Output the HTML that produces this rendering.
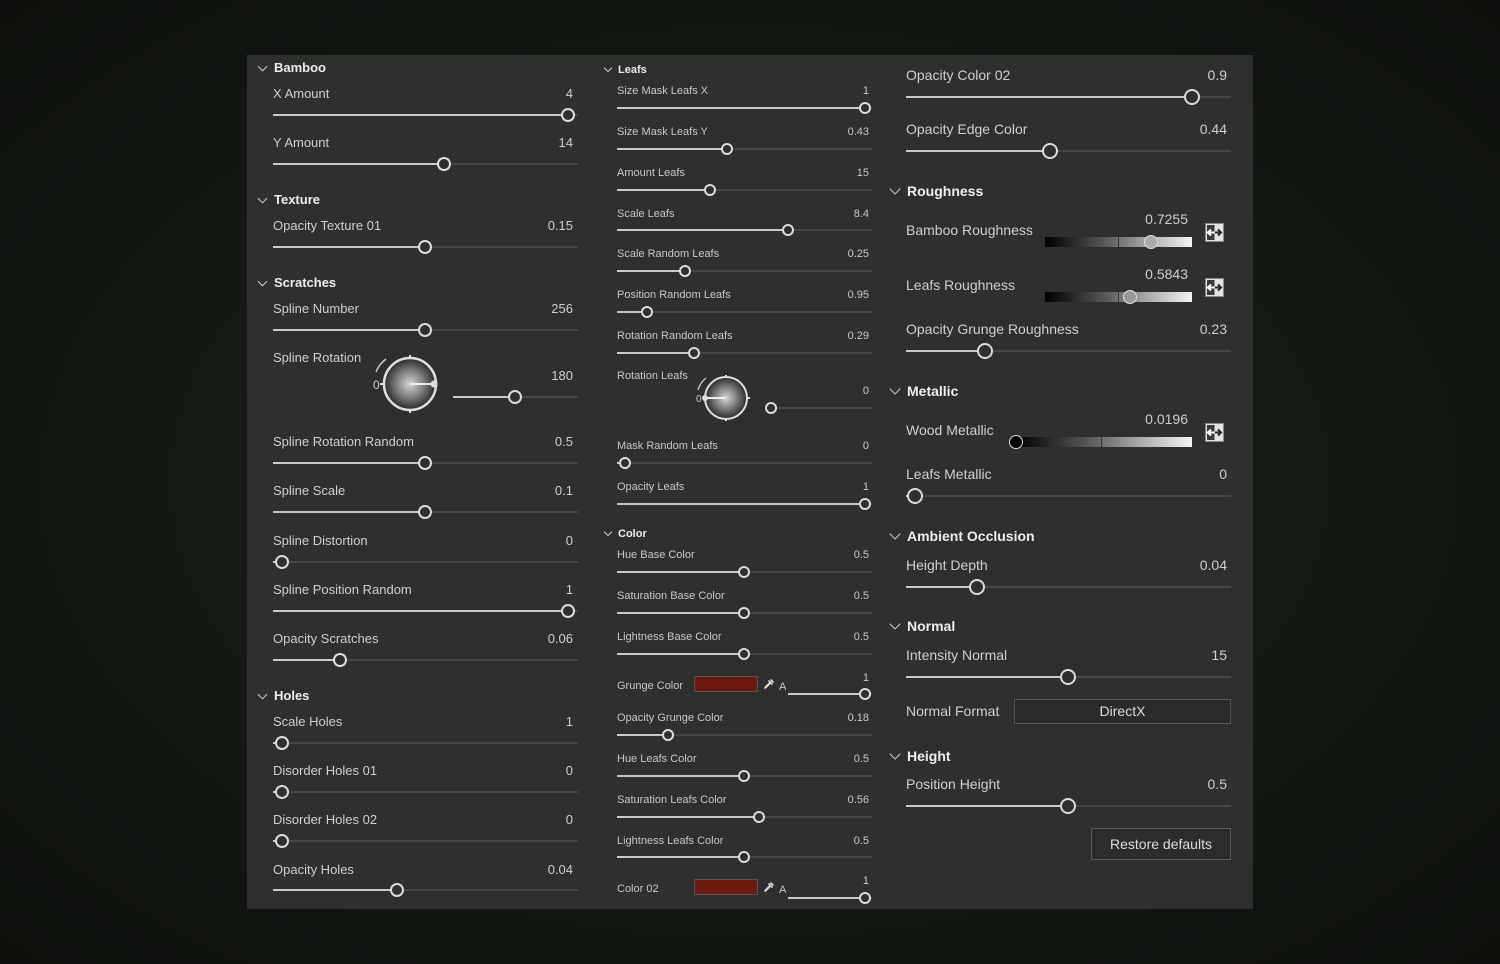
<!DOCTYPE html>
<html><head><meta charset="utf-8">
<style>
html,body{margin:0;padding:0}
body{width:1500px;height:964px;position:relative;overflow:hidden;background:radial-gradient(ellipse at 50% 50%,#1c221b 0%,#121611 70%,#0d100c 100%);font-family:"Liberation Sans",sans-serif;color:#d2d2d2}
#p{position:absolute;left:247px;top:55px;width:1006px;height:854px;background:#2f2f2f}
.L,.V,.H,.M,.MV,.R,.RV,.RH{position:absolute;white-space:nowrap}
.L{font-size:13px;line-height:16px;color:#cfcfcf}
.V{font-size:13px;line-height:16px;width:100px;text-align:right;color:#cfcfcf}
.H{font-size:13px;font-weight:bold;line-height:16px;color:#eee}
.M{font-size:11px;line-height:14px;color:#c8c8c8}
.MV{font-size:11px;line-height:14px;width:80px;text-align:right;color:#c8c8c8}
.R{font-size:14px;line-height:18px;color:#cfcfcf}
.RV{font-size:14px;line-height:18px;width:100px;text-align:right;color:#cfcfcf}
.RH{font-size:14px;font-weight:bold;line-height:18px;color:#eee}
.ch{position:absolute;width:6px;height:6px;border-right:1.5px solid #ccc;border-bottom:1.5px solid #ccc;transform:rotate(45deg)}
.s{position:absolute;height:2px;background:#464646}
.f{position:absolute;left:0;top:0;height:2px;background:#c9c9c9}
.k{position:absolute;border-radius:50%;border:2px solid #dcdcdc;background:#2f2f2f;box-sizing:border-box}
.k1{width:14px;height:14px;top:-6px;margin-left:-7px}
.k2{width:12px;height:12px;top:-5px;margin-left:-6px}
.k3{width:16px;height:16px;top:-7px;margin-left:-8px}
.gb{position:absolute;width:147px;height:10px;background:linear-gradient(90deg,#000 0%,#555 40%,#aaa 70%,#f4f4f4 100%)}
.gb i{position:absolute;left:73px;top:0;width:1px;height:10px;background:#333}
.ic{position:absolute;width:19px;height:19px}
.sw{position:absolute;width:64px;height:16px;background:#6d1b10;border:1px solid #555;box-sizing:border-box}
</style></head><body>
<div id="p"></div>

<!-- LEFT COLUMN -->
<div class="ch" style="left:259px;top:63px"></div><div class="H" style="left:274px;top:60px">Bamboo</div>
<div class="L" style="left:273px;top:86px">X Amount</div><div class="V" style="left:473px;top:86px">4</div>
<div class="s" style="left:273px;top:114px;width:305px"><div class="f" style="width:295px"></div><div class="k k1" style="left:295px"></div></div>
<div class="L" style="left:273px;top:135px">Y Amount</div><div class="V" style="left:473px;top:135px">14</div>
<div class="s" style="left:273px;top:163px;width:305px"><div class="f" style="width:171px"></div><div class="k k1" style="left:171px"></div></div>

<div class="ch" style="left:259px;top:195px"></div><div class="H" style="left:274px;top:192px">Texture</div>
<div class="L" style="left:273px;top:218px">Opacity Texture 01</div><div class="V" style="left:473px;top:218px">0.15</div>
<div class="s" style="left:273px;top:246px;width:305px"><div class="f" style="width:152px"></div><div class="k k1" style="left:152px"></div></div>

<div class="ch" style="left:259px;top:278px"></div><div class="H" style="left:274px;top:275px">Scratches</div>
<div class="L" style="left:273px;top:301px">Spline Number</div><div class="V" style="left:473px;top:301px">256</div>
<div class="s" style="left:273px;top:329px;width:305px"><div class="f" style="width:152px"></div><div class="k k1" style="left:152px"></div></div>
<div class="L" style="left:273px;top:350px">Spline Rotation</div><div class="V" style="left:473px;top:368px">180</div>
<svg style="position:absolute;left:370px;top:350px" width="80" height="70" viewBox="0 0 80 70">
<defs><radialGradient id="g1" cx="50%" cy="50%" r="50%"><stop offset="0" stop-color="#d8d8d8"/><stop offset="1" stop-color="#2a2a2a"/></radialGradient></defs>
<path d="M6 22 A30 30 0 0 1 16 9" stroke="#ccc" stroke-width="1.5" fill="none"/>
<circle cx="40" cy="34" r="26" fill="url(#g1)" stroke="#e0e0e0" stroke-width="2.5"/>
<line x1="40" y1="5" x2="40" y2="9" stroke="#ddd" stroke-width="2"/><line x1="40" y1="59" x2="40" y2="63" stroke="#ddd" stroke-width="2"/><line x1="10" y1="34" x2="14" y2="34" stroke="#ddd" stroke-width="2"/>
<line x1="40" y1="34" x2="64" y2="34" stroke="#eee" stroke-width="2"/><circle cx="64" cy="34" r="3.5" fill="#ddd"/>
<text x="3" y="39" font-size="12" fill="#ccc" font-family="Liberation Sans">0</text></svg>
<div class="s" style="left:453px;top:396px;width:125px"><div class="f" style="width:62px"></div><div class="k k1" style="left:62px"></div></div>
<div class="L" style="left:273px;top:434px">Spline Rotation Random</div><div class="V" style="left:473px;top:434px">0.5</div>
<div class="s" style="left:273px;top:462px;width:305px"><div class="f" style="width:152px"></div><div class="k k1" style="left:152px"></div></div>
<div class="L" style="left:273px;top:483px">Spline Scale</div><div class="V" style="left:473px;top:483px">0.1</div>
<div class="s" style="left:273px;top:511px;width:305px"><div class="f" style="width:152px"></div><div class="k k1" style="left:152px"></div></div>
<div class="L" style="left:273px;top:533px">Spline Distortion</div><div class="V" style="left:473px;top:533px">0</div>
<div class="s" style="left:273px;top:561px;width:305px"><div class="f" style="width:9px"></div><div class="k k1" style="left:9px"></div></div>
<div class="L" style="left:273px;top:582px">Spline Position Random</div><div class="V" style="left:473px;top:582px">1</div>
<div class="s" style="left:273px;top:610px;width:305px"><div class="f" style="width:295px"></div><div class="k k1" style="left:295px"></div></div>
<div class="L" style="left:273px;top:631px">Opacity Scratches</div><div class="V" style="left:473px;top:631px">0.06</div>
<div class="s" style="left:273px;top:659px;width:305px"><div class="f" style="width:67px"></div><div class="k k1" style="left:67px"></div></div>

<div class="ch" style="left:259px;top:691px"></div><div class="H" style="left:274px;top:688px">Holes</div>
<div class="L" style="left:273px;top:714px">Scale Holes</div><div class="V" style="left:473px;top:714px">1</div>
<div class="s" style="left:273px;top:742px;width:305px"><div class="f" style="width:9px"></div><div class="k k1" style="left:9px"></div></div>
<div class="L" style="left:273px;top:763px">Disorder Holes 01</div><div class="V" style="left:473px;top:763px">0</div>
<div class="s" style="left:273px;top:791px;width:305px"><div class="f" style="width:9px"></div><div class="k k1" style="left:9px"></div></div>
<div class="L" style="left:273px;top:812px">Disorder Holes 02</div><div class="V" style="left:473px;top:812px">0</div>
<div class="s" style="left:273px;top:840px;width:305px"><div class="f" style="width:9px"></div><div class="k k1" style="left:9px"></div></div>
<div class="L" style="left:273px;top:862px">Opacity Holes</div><div class="V" style="left:473px;top:862px">0.04</div>
<div class="s" style="left:273px;top:889px;width:305px"><div class="f" style="width:124px"></div><div class="k k1" style="left:124px"></div></div>

<!-- MIDDLE COLUMN -->
<div class="ch" style="left:605px;top:65px;width:5px;height:5px"></div><div class="M" style="left:618px;top:63px;font-weight:bold;color:#eee">Leafs</div>
<div class="M" style="left:617px;top:84px">Size Mask Leafs X</div><div class="MV" style="left:789px;top:84px">1</div>
<div class="s" style="left:617px;top:107px;width:255px"><div class="f" style="width:248px"></div><div class="k k2" style="left:248px"></div></div>
<div class="M" style="left:617px;top:125px">Size Mask Leafs Y</div><div class="MV" style="left:789px;top:125px">0.43</div>
<div class="s" style="left:617px;top:148px;width:255px"><div class="f" style="width:110px"></div><div class="k k2" style="left:110px"></div></div>
<div class="M" style="left:617px;top:166px">Amount Leafs</div><div class="MV" style="left:789px;top:166px">15</div>
<div class="s" style="left:617px;top:189px;width:255px"><div class="f" style="width:93px"></div><div class="k k2" style="left:93px"></div></div>
<div class="M" style="left:617px;top:207px">Scale Leafs</div><div class="MV" style="left:789px;top:207px">8.4</div>
<div class="s" style="left:617px;top:229px;width:255px"><div class="f" style="width:171px"></div><div class="k k2" style="left:171px"></div></div>
<div class="M" style="left:617px;top:247px">Scale Random Leafs</div><div class="MV" style="left:789px;top:247px">0.25</div>
<div class="s" style="left:617px;top:270px;width:255px"><div class="f" style="width:68px"></div><div class="k k2" style="left:68px"></div></div>
<div class="M" style="left:617px;top:288px">Position Random Leafs</div><div class="MV" style="left:789px;top:288px">0.95</div>
<div class="s" style="left:617px;top:311px;width:255px"><div class="f" style="width:30px"></div><div class="k k2" style="left:30px"></div></div>
<div class="M" style="left:617px;top:329px">Rotation Random Leafs</div><div class="MV" style="left:789px;top:329px">0.29</div>
<div class="s" style="left:617px;top:352px;width:255px"><div class="f" style="width:77px"></div><div class="k k2" style="left:77px"></div></div>
<div class="M" style="left:617px;top:369px">Rotation Leafs</div><div class="MV" style="left:789px;top:384px">0</div>
<svg style="position:absolute;left:694px;top:372px" width="60" height="54" viewBox="0 0 60 54">
<defs><radialGradient id="g2" cx="50%" cy="50%" r="50%"><stop offset="0" stop-color="#d8d8d8"/><stop offset="1" stop-color="#2a2a2a"/></radialGradient></defs>
<path d="M4 18 A24 24 0 0 1 12 6" stroke="#ccc" stroke-width="1.3" fill="none"/>
<circle cx="32" cy="26" r="21" fill="url(#g2)" stroke="#e0e0e0" stroke-width="2"/>
<line x1="32" y1="3" x2="32" y2="6" stroke="#ddd" stroke-width="2"/><line x1="32" y1="46" x2="32" y2="49" stroke="#ddd" stroke-width="2"/><line x1="53" y1="26" x2="56" y2="26" stroke="#ddd" stroke-width="2"/>
<line x1="32" y1="26" x2="11" y2="26" stroke="#eee" stroke-width="2"/><circle cx="11" cy="26" r="3" fill="#ddd"/>
<text x="2" y="30" font-size="10" fill="#ccc" font-family="Liberation Sans">0</text></svg>
<div class="s" style="left:771px;top:407px;width:101px"><div class="f" style="width:0px"></div><div class="k k2" style="left:0px"></div></div>
<div class="M" style="left:617px;top:439px">Mask Random Leafs</div><div class="MV" style="left:789px;top:439px">0</div>
<div class="s" style="left:617px;top:462px;width:255px"><div class="f" style="width:8px"></div><div class="k k2" style="left:8px"></div></div>
<div class="M" style="left:617px;top:480px">Opacity Leafs</div><div class="MV" style="left:789px;top:480px">1</div>
<div class="s" style="left:617px;top:503px;width:255px"><div class="f" style="width:248px"></div><div class="k k2" style="left:248px"></div></div>

<div class="ch" style="left:605px;top:529px;width:5px;height:5px"></div><div class="M" style="left:618px;top:527px;font-weight:bold;color:#eee">Color</div>
<div class="M" style="left:617px;top:548px">Hue Base Color</div><div class="MV" style="left:789px;top:548px">0.5</div>
<div class="s" style="left:617px;top:571px;width:255px"><div class="f" style="width:127px"></div><div class="k k2" style="left:127px"></div></div>
<div class="M" style="left:617px;top:589px">Saturation Base Color</div><div class="MV" style="left:789px;top:589px">0.5</div>
<div class="s" style="left:617px;top:612px;width:255px"><div class="f" style="width:127px"></div><div class="k k2" style="left:127px"></div></div>
<div class="M" style="left:617px;top:630px">Lightness Base Color</div><div class="MV" style="left:789px;top:630px">0.5</div>
<div class="s" style="left:617px;top:653px;width:255px"><div class="f" style="width:127px"></div><div class="k k2" style="left:127px"></div></div>
<div class="M" style="left:617px;top:679px">Grunge Color</div>
<div class="sw" style="left:694px;top:676px"></div>
<svg style="position:absolute;left:763px;top:678px" width="12" height="12" viewBox="0 0 12 12"><path d="M2 10 L7 5 M6 3 L9 6 M8 2 L10 4" stroke="#ddd" stroke-width="1.6" fill="none" stroke-linecap="round"/><path d="M1.5 10.5 L3 10.5 L8 5.5 L6.5 4 L1.5 9 Z" fill="#ddd"/></svg>
<div class="M" style="left:779px;top:680px">A</div>
<div class="MV" style="left:789px;top:671px">1</div>
<div class="s" style="left:788px;top:693px;width:84px"><div class="f" style="width:77px"></div><div class="k k2" style="left:77px"></div></div>
<div class="M" style="left:617px;top:711px">Opacity Grunge Color</div><div class="MV" style="left:789px;top:711px">0.18</div>
<div class="s" style="left:617px;top:734px;width:255px"><div class="f" style="width:51px"></div><div class="k k2" style="left:51px"></div></div>
<div class="M" style="left:617px;top:752px">Hue Leafs Color</div><div class="MV" style="left:789px;top:752px">0.5</div>
<div class="s" style="left:617px;top:775px;width:255px"><div class="f" style="width:127px"></div><div class="k k2" style="left:127px"></div></div>
<div class="M" style="left:617px;top:793px">Saturation Leafs Color</div><div class="MV" style="left:789px;top:793px">0.56</div>
<div class="s" style="left:617px;top:816px;width:255px"><div class="f" style="width:142px"></div><div class="k k2" style="left:142px"></div></div>
<div class="M" style="left:617px;top:834px">Lightness Leafs Color</div><div class="MV" style="left:789px;top:834px">0.5</div>
<div class="s" style="left:617px;top:856px;width:255px"><div class="f" style="width:127px"></div><div class="k k2" style="left:127px"></div></div>
<div class="M" style="left:617px;top:882px">Color 02</div>
<div class="sw" style="left:694px;top:879px"></div>
<svg style="position:absolute;left:763px;top:881px" width="12" height="12" viewBox="0 0 12 12"><path d="M2 10 L7 5 M6 3 L9 6 M8 2 L10 4" stroke="#ddd" stroke-width="1.6" fill="none" stroke-linecap="round"/><path d="M1.5 10.5 L3 10.5 L8 5.5 L6.5 4 L1.5 9 Z" fill="#ddd"/></svg>
<div class="M" style="left:779px;top:883px">A</div>
<div class="MV" style="left:789px;top:874px">1</div>
<div class="s" style="left:788px;top:897px;width:84px"><div class="f" style="width:77px"></div><div class="k k2" style="left:77px"></div></div>

<!-- RIGHT COLUMN -->
<div class="R" style="left:906px;top:66px">Opacity Color 02</div><div class="RV" style="left:1127px;top:66px">0.9</div>
<div class="s" style="left:906px;top:96px;width:325px"><div class="f" style="width:286px"></div><div class="k k3" style="left:286px"></div></div>
<div class="R" style="left:906px;top:120px">Opacity Edge Color</div><div class="RV" style="left:1127px;top:120px">0.44</div>
<div class="s" style="left:906px;top:150px;width:325px"><div class="f" style="width:144px"></div><div class="k k3" style="left:144px"></div></div>

<div class="ch" style="left:891px;top:185px;width:7px;height:7px"></div><div class="RH" style="left:907px;top:182px">Roughness</div>
<div class="R" style="left:906px;top:221px">Bamboo Roughness</div><div class="RV" style="left:1088px;top:210px">0.7255</div>
<div class="gb" style="left:1045px;top:237px"><i></i></div>
<div class="k" style="left:1144px;top:235px;width:14px;height:14px;background:#aaa;border:1px solid #ddd"></div>
<svg class="ic" style="left:1205px;top:223px" viewBox="0 0 19 19"><rect x="0.5" y="0.5" width="18" height="18" fill="#e4e4e4" stroke="#888"/><rect x="2" y="2" width="7.5" height="15" fill="#3a3a3a"/><path d="M3 9.5 L16 9.5 M6 6.5 L3 9.5 L6 12.5 M13 6.5 L16 9.5 L13 12.5" stroke="#fff" stroke-width="2" fill="none"/><path d="M10 9.5 L16 9.5 M13 6.5 L16 9.5 L13 12.5" stroke="#222" stroke-width="2" fill="none"/></svg>
<div class="R" style="left:906px;top:276px">Leafs Roughness</div><div class="RV" style="left:1088px;top:265px">0.5843</div>
<div class="gb" style="left:1045px;top:292px"><i></i></div>
<div class="k" style="left:1123px;top:290px;width:14px;height:14px;background:#999;border:1px solid #ddd"></div>
<svg class="ic" style="left:1205px;top:278px" viewBox="0 0 19 19"><rect x="0.5" y="0.5" width="18" height="18" fill="#e4e4e4" stroke="#888"/><rect x="2" y="2" width="7.5" height="15" fill="#3a3a3a"/><path d="M3 9.5 L16 9.5 M6 6.5 L3 9.5 L6 12.5 M13 6.5 L16 9.5 L13 12.5" stroke="#fff" stroke-width="2" fill="none"/><path d="M10 9.5 L16 9.5 M13 6.5 L16 9.5 L13 12.5" stroke="#222" stroke-width="2" fill="none"/></svg>
<div class="R" style="left:906px;top:320px">Opacity Grunge Roughness</div><div class="RV" style="left:1127px;top:320px">0.23</div>
<div class="s" style="left:906px;top:350px;width:325px"><div class="f" style="width:79px"></div><div class="k k3" style="left:79px"></div></div>

<div class="ch" style="left:891px;top:385px;width:7px;height:7px"></div><div class="RH" style="left:907px;top:382px">Metallic</div>
<div class="R" style="left:906px;top:421px">Wood Metallic</div><div class="RV" style="left:1088px;top:410px">0.0196</div>
<div class="gb" style="left:1016px;top:437px;width:176px"><i style="left:85px"></i></div>
<div class="k" style="left:1009px;top:435px;width:14px;height:14px;background:#000;border:1.5px solid #ddd"></div>
<svg class="ic" style="left:1205px;top:423px" viewBox="0 0 19 19"><rect x="0.5" y="0.5" width="18" height="18" fill="#e4e4e4" stroke="#888"/><rect x="2" y="2" width="7.5" height="15" fill="#3a3a3a"/><path d="M3 9.5 L16 9.5 M6 6.5 L3 9.5 L6 12.5 M13 6.5 L16 9.5 L13 12.5" stroke="#fff" stroke-width="2" fill="none"/><path d="M10 9.5 L16 9.5 M13 6.5 L16 9.5 L13 12.5" stroke="#222" stroke-width="2" fill="none"/></svg>
<div class="R" style="left:906px;top:465px">Leafs Metallic</div><div class="RV" style="left:1127px;top:465px">0</div>
<div class="s" style="left:906px;top:495px;width:325px"><div class="f" style="width:9px"></div><div class="k k3" style="left:9px"></div></div>

<div class="ch" style="left:891px;top:530px;width:7px;height:7px"></div><div class="RH" style="left:907px;top:527px">Ambient Occlusion</div>
<div class="R" style="left:906px;top:556px">Height Depth</div><div class="RV" style="left:1127px;top:556px">0.04</div>
<div class="s" style="left:906px;top:586px;width:325px"><div class="f" style="width:71px"></div><div class="k k3" style="left:71px"></div></div>

<div class="ch" style="left:891px;top:620px;width:7px;height:7px"></div><div class="RH" style="left:907px;top:617px">Normal</div>
<div class="R" style="left:906px;top:646px">Intensity Normal</div><div class="RV" style="left:1127px;top:646px">15</div>
<div class="s" style="left:906px;top:676px;width:325px"><div class="f" style="width:162px"></div><div class="k k3" style="left:162px"></div></div>
<div class="R" style="left:906px;top:702px">Normal Format</div>
<div style="position:absolute;left:1014px;top:699px;width:217px;height:25px;border:1px solid #555;box-sizing:border-box;background:#2a2a2a;text-align:center;font-size:14px;line-height:23px;color:#ddd">DirectX</div>

<div class="ch" style="left:891px;top:750px;width:7px;height:7px"></div><div class="RH" style="left:907px;top:747px">Height</div>
<div class="R" style="left:906px;top:775px">Position Height</div><div class="RV" style="left:1127px;top:775px">0.5</div>
<div class="s" style="left:906px;top:805px;width:325px"><div class="f" style="width:162px"></div><div class="k k3" style="left:162px"></div></div>
<div style="position:absolute;left:1091px;top:828px;width:140px;height:32px;border:1px solid #5a5a5a;box-sizing:border-box;background:#2c2c2c;text-align:center;font-size:14px;line-height:30px;color:#ddd">Restore defaults</div>
</body></html>
